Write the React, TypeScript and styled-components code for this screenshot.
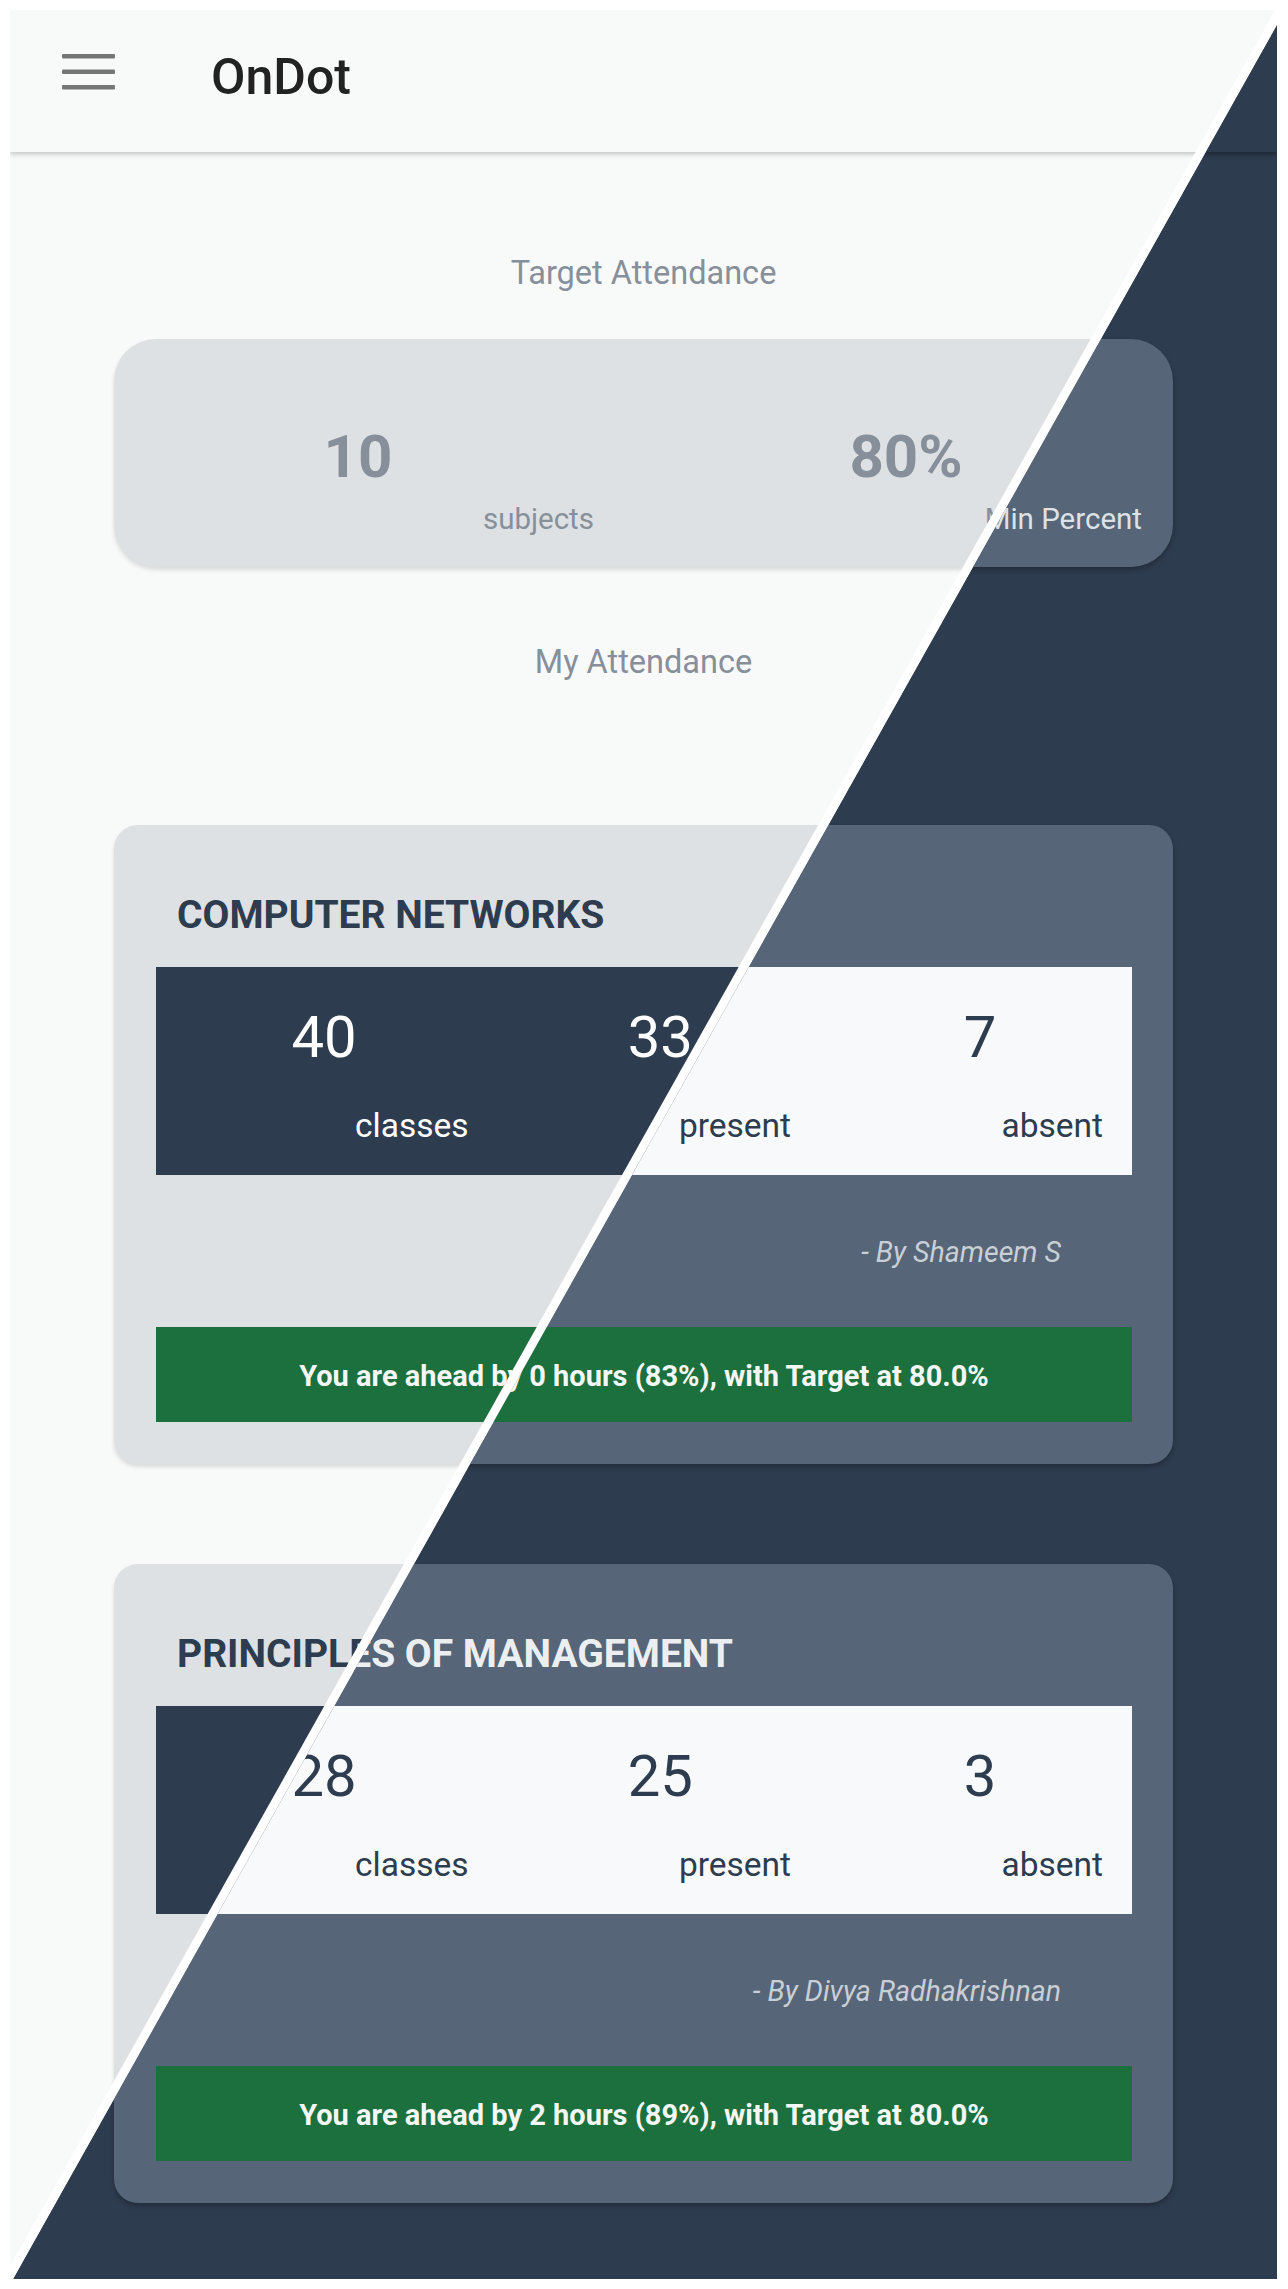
import React from "react";
import styled, { createGlobalStyle, ThemeProvider } from "styled-components";

type Palette = {
  page: string;
  header: string;
  headerShadow: string;
  brand: string;
  menu: string;
  muted: string;
  number: string;
  card: string;
  cardShadow: string;
  title: string;
  stripBg: string;
  stripText: string;
  author: string;
};

const light: Palette = {
  page: "#f8f9f9",
  header: "#f8f9f9",
  headerShadow: "0 2px 5px rgba(0,0,0,0.22)",
  brand: "#222222",
  menu: "#767676",
  muted: "#87909a",
  number: "#87909a",
  card: "#dee1e3",
  cardShadow: "0 3px 4px rgba(0,0,0,0.12)",
  title: "#2d3c4f",
  stripBg: "#2d3c4f",
  stripText: "#ffffff",
  author: "#87909a",
};

const dark: Palette = {
  page: "#2d3c4f",
  header: "#2d3c4f",
  headerShadow: "0 3px 4px rgba(0,0,0,0.3)",
  brand: "#ffffff",
  menu: "#d5dae0",
  muted: "#dde2e7",
  number: "#dde2e7",
  card: "#566577",
  cardShadow: "0 3px 5px rgba(0,0,0,0.25)",
  title: "#eceff2",
  stripBg: "#f8f9fa",
  stripText: "#2d3c4f",
  author: "#c9cfd6",
};

const GlobalStyle = createGlobalStyle`
  html, body {
    margin: 0;
    padding: 0;
    background: #ffffff;
  }
  body {
    font-family: Roboto, "Liberation Sans", Arial, sans-serif;
  }
  * { box-sizing: border-box; }
`;

const Frame = styled.div`
  width: 1288px;
  height: 2289px;
  padding: 10px 11px 10px 10px;
  background: #ffffff;
`;

const Viewport = styled.div`
  position: relative;
  isolation: isolate;
  width: 1267px;
  height: 2269px;
  overflow: hidden;
`;

const DarkLayer = styled.div`
  position: absolute;
  inset: 0;
  z-index: 2;
  clip-path: polygon(1275.25px 0px, 1400px 0px, 1400px 2269px, 3px 2269px);
`;

const Divider = styled.svg`
  position: absolute;
  left: 0;
  top: 0;
  z-index: 3;
  width: 1267px;
  height: 2269px;
  pointer-events: none;
`;

const Screen = styled.div`
  height: 100%;
  background: ${(p) => p.theme.page};
  display: flex;
  flex-direction: column;
  font-family: Roboto, "Liberation Sans", Arial, sans-serif;
`;

const AppBar = styled.header`
  position: relative;
  z-index: 1;
  flex-shrink: 0;
  height: 142px;
  display: flex;
  align-items: flex-start;
  padding: 44px 0 0 52px;
  background: ${(p) => p.theme.header};
  box-shadow: ${(p) => p.theme.headerShadow};
`;

const MenuIcon = styled.svg`
  display: block;
  width: 53px;
  height: 36px;
  fill: ${(p) => p.theme.menu};
`;

const Brand = styled.h1`
  margin: -2px 0 0 96px;
  font-size: 50px;
  line-height: 50px;
  font-weight: 500;
  color: ${(p) => p.theme.brand};
`;

const Content = styled.main`
  display: flex;
  flex-direction: column;
  align-items: center;
`;

const SectionLabel = styled.h2<{ $top: number }>`
  margin: ${(p) => p.$top}px 0 0;
  font-size: 32.5px;
  line-height: 31px;
  font-weight: 400;
  color: ${(p) => p.theme.muted};
`;

const TargetCard = styled.section`
  width: 1059px;
  margin-top: 50px;
  padding: 88px 31px 33px 8px;
  border-radius: 42px;
  background: ${(p) => p.theme.card};
  box-shadow: ${(p) => p.theme.cardShadow};
  display: grid;
  grid-template-columns: 472px 472px;
  column-gap: 76px;
`;

const TargetStat = styled.div`
  display: flex;
  flex-direction: column;
`;

const TargetValue = styled.span`
  align-self: center;
  font-size: 60px;
  line-height: 60px;
  font-weight: 700;
  color: ${(p) => p.theme.number};
`;

const TargetCaption = styled.span`
  align-self: flex-end;
  margin-top: 18px;
  font-size: 29.5px;
  line-height: 29px;
  color: ${(p) => p.theme.muted};
`;

const SubjectCard = styled.section<{ $top: number }>`
  width: 1059px;
  margin-top: ${(p) => p.$top}px;
  padding: 71px 41px 42px 42px;
  border-radius: 24px;
  background: ${(p) => p.theme.card};
  box-shadow: ${(p) => p.theme.cardShadow};
  display: flex;
  flex-direction: column;
`;

const SubjectTitle = styled.h3`
  margin: 0 0 0 21px;
  font-size: 39px;
  line-height: 39px;
  font-weight: 700;
  color: ${(p) => p.theme.title};
`;

const Strip = styled.div`
  margin-top: 32px;
  height: 208px;
  padding: 41px 0 33px;
  background: ${(p) => p.theme.stripBg};
  color: ${(p) => p.theme.stripText};
  display: flex;
  flex-direction: column;
`;

const NumberRow = styled.div`
  display: flex;
  justify-content: space-around;
  font-size: 58px;
  line-height: 58px;
  font-weight: 400;
`;

const LabelRow = styled.div`
  display: flex;
  justify-content: space-between;
  margin-top: 43px;
  padding: 0 29px 0 199px;
  font-size: 33.5px;
  line-height: 33px;
`;

const Author = styled.p`
  align-self: flex-end;
  margin: 64px 71px 0 0;
  font-size: 28.5px;
  line-height: 28px;
  font-style: italic;
  color: ${(p) => p.theme.author};
`;

const StatusBar = styled.div`
  margin-top: 60px;
  height: 95px;
  display: flex;
  align-items: center;
  justify-content: center;
  padding-top: 3px;
  background: #1b703e;
  color: #f4f7f5;
  font-size: 29px;
  font-weight: 700;
`;

type Subject = {
  name: string;
  total: number;
  present: number;
  absent: number;
  teacher: string;
  status: string;
};

const subjects: Subject[] = [
  {
    name: "COMPUTER NETWORKS",
    total: 40,
    present: 33,
    absent: 7,
    teacher: "- By Shameem S",
    status: "You are ahead by 0 hours (83%), with Target at 80.0%",
  },
  {
    name: "PRINCIPLES OF MANAGEMENT",
    total: 28,
    present: 25,
    absent: 3,
    teacher: "- By Divya Radhakrishnan",
    status: "You are ahead by 2 hours (89%), with Target at 80.0%",
  },
];

function Page() {
  return (
    <Screen>
      <AppBar>
        <MenuIcon viewBox="0 0 53 36">
          <rect x="0" y="0" width="53" height="4.5" rx="1" />
          <rect x="0" y="15.5" width="53" height="4.5" rx="1" />
          <rect x="0" y="31" width="53" height="4.5" rx="1" />
        </MenuIcon>
        <Brand>OnDot</Brand>
      </AppBar>
      <Content>
        <SectionLabel $top={106}>Target Attendance</SectionLabel>
        <TargetCard>
          <TargetStat>
            <TargetValue>10</TargetValue>
            <TargetCaption>subjects</TargetCaption>
          </TargetStat>
          <TargetStat>
            <TargetValue>80%</TargetValue>
            <TargetCaption>Min Percent</TargetCaption>
          </TargetStat>
        </TargetCard>
        <SectionLabel $top={80}>My Attendance</SectionLabel>
        {subjects.map((s, i) => (
          <SubjectCard key={s.name} $top={i === 0 ? 147 : 100}>
            <SubjectTitle>{s.name}</SubjectTitle>
            <Strip>
              <NumberRow>
                <span>{s.total}</span>
                <span>{s.present}</span>
                <span>{s.absent}</span>
              </NumberRow>
              <LabelRow>
                <span>classes</span>
                <span>present</span>
                <span>absent</span>
              </LabelRow>
            </Strip>
            <Author>{s.teacher}</Author>
            <StatusBar>{s.status}</StatusBar>
          </SubjectCard>
        ))}
      </Content>
    </Screen>
  );
}

export default function App() {
  return (
    <>
      <GlobalStyle />
      <Frame>
        <Viewport>
          <ThemeProvider theme={light}>
            <Page />
          </ThemeProvider>
          <DarkLayer>
            <ThemeProvider theme={dark}>
              <Page />
            </ThemeProvider>
          </DarkLayer>
          <Divider viewBox="0 0 1267 2269">
            <polygon points="1265.25,0 1275.25,0 3,2269 -7,2269" fill="#ffffff" />
          </Divider>
        </Viewport>
      </Frame>
    </>
  );
}
